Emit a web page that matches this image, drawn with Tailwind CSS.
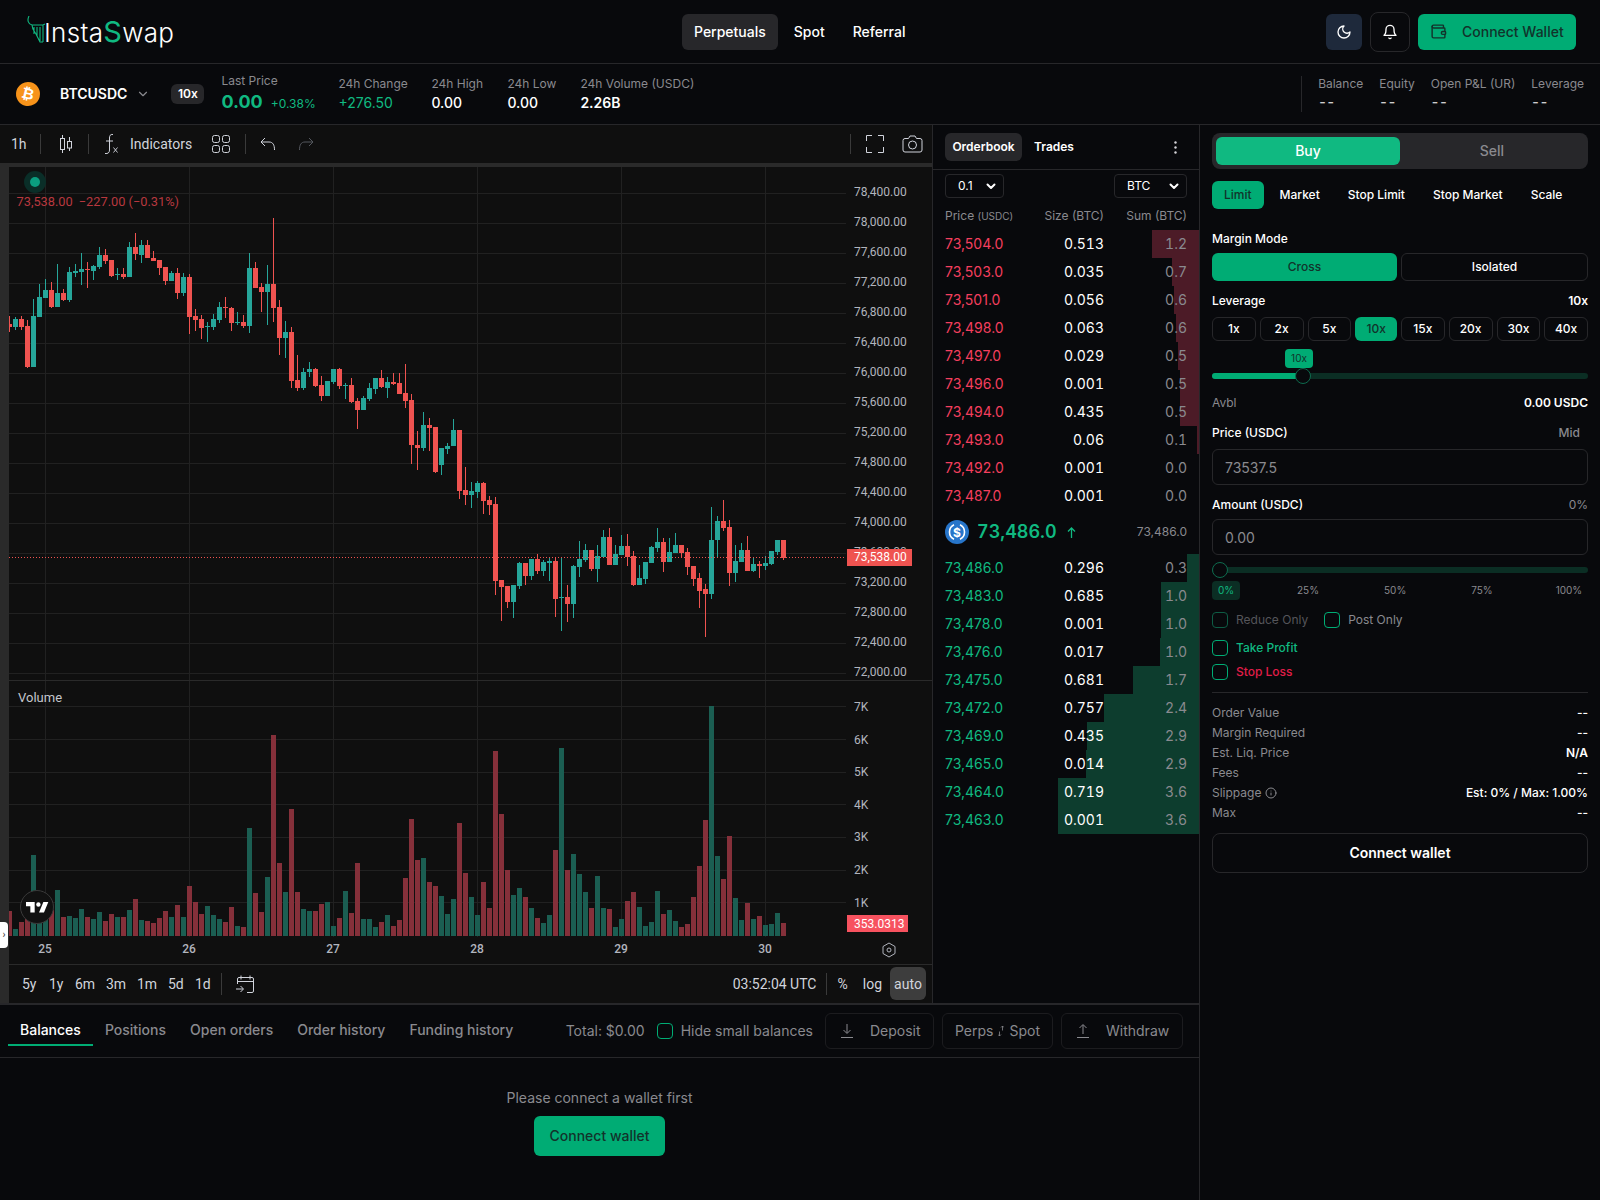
<!DOCTYPE html>
<html lang="en">
<head>
  <meta charset="UTF-8">
  <meta name="viewport" content="width=device-width, initial-scale=1.0" />
  <script src="https://cdn.jsdelivr.net/npm/@tailwindcss/browser@4"></script>
  <title>InstaSwap - BTCUSDC</title>
</head>
<body class="bg-[#08090c] text-white [font-family:Inter,sans-serif]">
<div class="w-[1600px] h-[1200px] overflow-hidden flex flex-col">

  <!-- top nav -->
  <header class="h-[64px] shrink-0 border-b border-[#27272a] relative flex items-center">
    <div class="ml-[27px] flex items-center h-[32px]">
      <svg class="w-[19px] h-[27px] -mt-[4px] shrink-0" viewBox="0 0 19 27" fill="none" stroke="#10b981" stroke-width="1.100">
        <path d="M2 0C0 4 1 8 5 9h11l2-1M5 9c0 4 2 6 4 9l4 8h3M7 11v7M10 11v9M13 11v14M16 9v17"/>
      </svg>
      <span class="-ml-[2px] font-light text-[26px] leading-none tracking-[0.3px]">Insta<span class="text-[#10b981] font-normal text-[29px]">S</span>wap</span>
    </div>
    <nav class="absolute left-[682px] top-[14px] flex gap-1 text-sm font-medium">
      <a class="h-9 px-3 flex items-center rounded-md bg-[#27272a]">Perpetuals</a>
      <a class="h-9 px-3 flex items-center rounded-md">Spot</a>
      <a class="h-9 px-3 flex items-center rounded-md">Referral</a>
    </nav>
    <div class="ml-auto mr-[24px] flex items-center gap-2">
      <button class="w-9 h-9 rounded-md bg-[#1e293b] flex items-center justify-center">
        <svg class="w-4 h-4" viewBox="0 0 24 24" fill="none" stroke="white" stroke-width="2" stroke-linecap="round" stroke-linejoin="round"><path d="M12 3a6 6 0 0 0 9 9 9 9 0 1 1-9-9Z"/></svg>
      </button>
      <button class="w-10 h-10 rounded-lg border border-[#27272a] flex items-center justify-center">
        <svg class="w-4 h-4" viewBox="0 0 24 24" fill="none" stroke="white" stroke-width="2" stroke-linecap="round" stroke-linejoin="round"><path d="M6 8a6 6 0 0 1 12 0c0 7 3 9 3 9H3s3-2 3-9"/><path d="M10.3 21a1.94 1.94 0 0 0 3.4 0"/></svg>
      </button>
      <button class="w-[158px] h-9 rounded-md bg-[#00ac74] flex items-center pl-[12px] text-sm font-medium text-[#12332b]">
        <svg class="w-[17px] h-[17px]" viewBox="0 0 24 24" fill="none" stroke="#12332b" stroke-width="2" stroke-linecap="round" stroke-linejoin="round"><path d="M19 7V4a1 1 0 0 0-1-1H5a2 2 0 0 0 0 4h15a1 1 0 0 1 1 1v4h-3a2 2 0 0 0 0 4h3a1 1 0 0 0 1-1v-2a1 1 0 0 0-1-1"/><path d="M3 5v14a2 2 0 0 0 2 2h15a1 1 0 0 0 1-1v-4"/></svg>
        <span class="ml-[15px]">Connect Wallet</span>
      </button>
    </div>
  </header>

  <!-- market bar -->
  <div class="h-[61px] shrink-0 border-b border-[#27272a] flex items-center">
    <div class="ml-4 w-6 h-6 rounded-full bg-[#f7931a] flex items-center justify-center text-[15px] font-bold text-white [font-family:'DejaVu_Sans',sans-serif] rotate-[14deg]">₿</div>
    <span class="ml-[20px] text-sm font-semibold">BTCUSDC</span>
    <svg class="ml-[9px] w-[14px] h-[14px]" viewBox="0 0 24 24" fill="none" stroke="#8a8a8f" stroke-width="2" stroke-linecap="round" stroke-linejoin="round"><path d="m6 9 6 6 6-6"/></svg>
    <span class="ml-[21px] w-[33px] h-5 rounded-md bg-[#27272a] flex items-center justify-center text-xs font-semibold">10x</span>
    <div class="ml-[17px] w-[117px]">
      <div class="text-xs text-[#8a8a8f] leading-4">Last Price</div>
      <div class="flex items-baseline gap-2 -mt-[1px] leading-6">
        <span class="text-lg font-bold text-[#10b981]">0.00</span>
        <span class="text-xs text-[#10b981]">+0.38%</span>
      </div>
    </div>
    <div class="w-[93px]">
      <div class="text-xs text-[#8a8a8f] leading-4">24h Change</div>
      <div class="text-sm text-[#10b981] leading-5 mt-[1px]">+276.50</div>
    </div>
    <div class="w-[76px]">
      <div class="text-xs text-[#8a8a8f] leading-4">24h High</div>
      <div class="text-sm font-medium leading-5 mt-[1px]">0.00</div>
    </div>
    <div class="w-[73px]">
      <div class="text-xs text-[#8a8a8f] leading-4">24h Low</div>
      <div class="text-sm font-medium leading-5 mt-[1px]">0.00</div>
    </div>
    <div>
      <div class="text-xs text-[#8a8a8f] leading-4">24h Volume (USDC)</div>
      <div class="text-sm font-semibold leading-5 mt-[1px]">2.26B</div>
    </div>
    <div class="ml-auto h-9 border-l border-[#27272a] pl-[16px] pr-4 flex gap-4 text-xs text-[#8a8a8f]">
      <div><div class="leading-4">Balance</div><div class="text-sm font-medium text-white/80 leading-5 tracking-[2px] pl-[1px]">--</div></div>
      <div><div class="leading-4">Equity</div><div class="text-sm font-medium text-white/80 leading-5 tracking-[2px] pl-[1px]">--</div></div>
      <div><div class="leading-4">Open P&amp;L (UR)</div><div class="text-sm font-medium text-white/80 leading-5 tracking-[2px] pl-[1px]">--</div></div>
      <div><div class="leading-4">Leverage</div><div class="text-sm font-medium text-white/80 leading-5 tracking-[2px] pl-[1px]">--</div></div>
    </div>
  </div>

  <div class="flex-1 flex min-h-0">
    <!-- left side -->
    <div class="w-[1200px] border-r border-[#27272a] flex flex-col">
      <div class="h-[878px] flex">

        <!-- chart -->
        <section class="w-[932px] relative flex flex-col bg-[#0f0f0f] [font-family:Roboto,sans-serif] text-[#d1d4dc]">
          <div class="h-[38px] shrink-0 flex items-center text-sm">
            <span class="ml-[11px] w-[15px]">1h</span>
            <i class="ml-[14px] w-px h-5 bg-[#3a3a3a]"></i>
            <svg class="ml-[17px] w-[16px] h-[20px]" viewBox="0 0 16 20" fill="none" stroke="#d1d4dc"><path d="M4.5 1v3M4.5 16v3M11.5 3v4M11.5 14v3"/><rect x="2.5" y="4.5" width="4" height="11"/><rect x="9.5" y="7.5" width="4" height="6.5"/></svg>
            <i class="ml-[14px] w-px h-5 bg-[#3a3a3a]"></i>
            <svg class="ml-[14px] w-[16px] h-[22px]" viewBox="0 0 16 22" fill="none" stroke="#d1d4dc"><path d="M10 1.5C7 1 6.5 3 6.5 5v12c0 2.5-1.5 4-4.5 3.5M3 8h7"/><path d="M10.5 14.5l4 5M14.5 14.5l-4 5" stroke-width=".9"/></svg>
            <span class="ml-[11px] w-[62px]">Indicators</span>
            <svg class="ml-[20px] w-[18px] h-[18px]" viewBox="0 0 18 18" fill="none" stroke="#d1d4dc"><rect x=".5" y=".5" width="7" height="7" rx="2"/><rect x="10.5" y=".5" width="7" height="7" rx="2"/><rect x=".5" y="10.5" width="7" height="7" rx="2"/><rect x="10.5" y="10.5" width="7" height="7" rx="2"/></svg>
            <i class="ml-[15px] w-px h-5 bg-[#3a3a3a]"></i>
            <svg class="ml-[14px] w-[16px] h-[14px]" viewBox="0 0 16 14" fill="none" stroke="#d1d4dc"><path d="M5 1L1 5l4 4M1 5h8c4 0 5.500 3 5.500 8"/></svg>
            <svg class="ml-[22px] w-[16px] h-[14px]" viewBox="0 0 16 14" fill="none" stroke="#55585f"><path d="M11 1l4 4-4 4M15 5H7c-4 0-5.500 3-5.500 8"/></svg>
            <i class="ml-auto w-px h-5 bg-[#3a3a3a]"></i>
            <svg class="ml-[15px] w-[18px] h-[18px]" viewBox="0 0 18 18" fill="none" stroke="#d1d4dc"><path d="M.5 6V.5H6M12 .5h5.500V6M17.500 12v5.500H12M6 17.500H.5V12"/></svg>
            <svg class="ml-[18px] mr-[9px] w-[21px] h-[18px]" viewBox="0 0 21 18" fill="none" stroke="#d1d4dc"><path d="M1 5.500A2 2 0 0 1 3 3.500h3.500L8 1h5l1.500 2.500H18a2 2 0 0 1 2 2V15a2 2 0 0 1-2 2H3a2 2 0 0 1-2-2z"/><circle cx="10.500" cy="10" r="4"/></svg>
          </div>
          <div class="h-1 shrink-0 bg-[#2a2a2a]"></div>
          <div class="flex-1 flex min-h-0">
            <div class="w-[9px] shrink-0 bg-[#2a2a2a]"></div>
            <div class="flex-1 flex flex-col min-w-0">
              <svg id="chart" class="block" width="923" height="797" viewBox="9 167 923 797" shape-rendering="crispEdges">
                <g id="grid"></g>
                <g id="bars"></g>
                <line x1="9" x2="846" y1="557.500" y2="557.500" stroke="#ef5350" stroke-dasharray="1 2"></line>
                <rect x="9" y="680" width="923" height="1" fill="#2a2a2a"></rect>
                <g fill="#b2b5be" font-size="12" shape-rendering="auto">
                  <text x="854" y="196">78,400.00</text>
                  <text x="854" y="226">78,000.00</text>
                  <text x="854" y="256">77,600.00</text>
                  <text x="854" y="286">77,200.00</text>
                  <text x="854" y="316">76,800.00</text>
                  <text x="854" y="346">76,400.00</text>
                  <text x="854" y="376">76,000.00</text>
                  <text x="854" y="406">75,600.00</text>
                  <text x="854" y="436">75,200.00</text>
                  <text x="854" y="466">74,800.00</text>
                  <text x="854" y="496">74,400.00</text>
                  <text x="854" y="526">74,000.00</text>
                  <text x="854" y="556">73,600.00</text>
                  <text x="854" y="586">73,200.00</text>
                  <text x="854" y="616">72,800.00</text>
                  <text x="854" y="646">72,400.00</text>
                  <text x="854" y="676">72,000.00</text>
                  <text x="854" y="711">7K</text>
                  <text x="854" y="744">6K</text>
                  <text x="854" y="776">5K</text>
                  <text x="854" y="809">4K</text>
                  <text x="854" y="841">3K</text>
                  <text x="854" y="874">2K</text>
                  <text x="854" y="907">1K</text>
                  <text x="45" y="953" text-anchor="middle" font-weight="500">25</text>
                  <text x="189" y="953" text-anchor="middle" font-weight="500">26</text>
                  <text x="333" y="953" text-anchor="middle" font-weight="500">27</text>
                  <text x="477" y="953" text-anchor="middle" font-weight="500">28</text>
                  <text x="621" y="953" text-anchor="middle" font-weight="500">29</text>
                  <text x="765" y="953" text-anchor="middle" font-weight="500">30</text>
                  <text x="16.500" y="206" fill="#b8383f" font-size="12.800">73,538.00<tspan dx="6">−227.00 (−0.31%)</tspan></text>
                  <text x="18" y="702" fill="#c4c6cc" font-size="13">Volume</text>
                </g>
                <rect x="847" y="549" width="65" height="17" rx="1" fill="#ef5350"></rect>
                <text x="854" y="561" fill="#fff" font-size="12" shape-rendering="auto">73,538.00</text>
                <rect x="847" y="915" width="61" height="17" rx="1" fill="#f7525f"></rect>
                <text x="854" y="928" fill="#fff" font-size="12" shape-rendering="auto">353.0313</text>
                <g shape-rendering="auto">
                  <circle cx="35" cy="182" r="11" fill="#0a2e28"></circle>
                  <circle cx="35" cy="182" r="5" fill="#0b9e80"></circle>
                  <circle cx="37" cy="907" r="16.500" fill="#111" stroke="#3a3a3a"></circle>
                  <g transform="translate(26 902) scale(.62)" fill="#fff"><path d="M14 17H7V7H0V0h14v17zM29 17h-8L28 0h8l-7 17z"></path><circle cx="20" cy="4" r="3.500"></circle></g>
                  <path d="M889 943l6 3.500v7l-6 3.500-6-3.500v-7z" fill="none" stroke="#b2b5be"></path>
                  <circle cx="889" cy="950" r="2" fill="none" stroke="#b2b5be"></circle>
                </g>
                <rect x="9" y="964" width="923" height="1" fill="#2a2a2a"></rect>
              </svg>
              <div class="h-[39px] shrink-0 flex items-center text-sm border-t border-[#2a2a2a]">
                <span class="ml-[13px] w-[27px]">5y</span>
                <span class="w-[26px]">1y</span>
                <span class="w-[31px]">6m</span>
                <span class="w-[31px]">3m</span>
                <span class="w-[31px]">1m</span>
                <span class="w-[27px]">5d</span>
                <span class="w-[26px]">1d</span>
                <i class="w-px h-[22px] bg-[#3a3a3a]"></i>
                <svg class="ml-[14px] w-[19px] h-[18px]" viewBox="0 0 19 18" fill="none" stroke="#d1d4dc"><path d="M1.500 9V4a1.500 1.500 0 0 1 1.500-1.500h13A1.500 1.500 0 0 1 17.500 4v12a1.500 1.500 0 0 1-1.500 1.500h-5M1.500 6.500h16M5 .5v4M14 .5v4M0 14h7M4.500 11l3 3-3 3"/></svg>
                <span class="ml-auto">03:52:04 UTC</span>
                <i class="ml-[10px] w-px h-[22px] bg-[#3a3a3a]"></i>
                <span class="ml-[10px]">%</span>
                <span class="ml-[15px]">log</span>
                <span class="ml-[8px] mr-[6px] w-[36px] h-[33px] -mt-[1px] rounded-md bg-[#3d3d3d] flex items-center justify-center">auto</span>
              </div>
            </div>
          </div>
          <div class="absolute left-0 top-[797px] w-[8px] h-[26px] rounded-r-[4px] bg-white flex items-center justify-center text-[10px] leading-none text-[#333]">›</div>
        </section>

        <!-- orderbook -->
        <section class="w-[267px] border-l border-[#27272a] flex flex-col">
          <div class="h-[45px] shrink-0 border-b border-[#27272a] flex items-center pl-3 pr-[22px] text-xs font-semibold">
            <span class="w-[77px] h-7 rounded-md bg-[#27272a] flex items-center justify-center">Orderbook</span>
            <span class="ml-[12px]">Trades</span>
            <svg class="ml-auto w-[3px] h-[13px]" viewBox="0 0 3 13" fill="#d4d4d8"><circle cx="1.500" cy="1.500" r="1.200"></circle><circle cx="1.500" cy="6.500" r="1.200"></circle><circle cx="1.500" cy="11.500" r="1.200"></circle></svg>
          </div>
          <div class="flex justify-between px-3 mt-[4px] text-xs">
            <div class="w-[59px] h-6 border border-[#27272a] rounded flex items-center pl-3">0.1
              <svg class="ml-auto mr-[6px] w-[12px] h-[12px]" viewBox="0 0 24 24" fill="none" stroke="white" stroke-width="4" stroke-linecap="round" stroke-linejoin="round"><path d="m5 9 7 7 7-7"/></svg>
            </div>
            <div class="w-[73px] h-6 border border-[#27272a] rounded flex items-center pl-3">BTC
              <svg class="ml-auto mr-[6px] w-[12px] h-[12px]" viewBox="0 0 24 24" fill="none" stroke="white" stroke-width="4" stroke-linecap="round" stroke-linejoin="round"><path d="m5 9 7 7 7-7"/></svg>
            </div>
          </div>
          <div class="flex items-center h-4 mt-[10px] px-3 text-xs text-[#8a8a8f]">
            <span class="flex-1">Price <span class="text-[10px]">(USDC)</span></span>
            <span class="text-right">Size (BTC)</span>
            <span class="w-[83px] text-right">Sum (BTC)</span>
          </div>
          <div id="asks" class="mt-[6px]"></div>
          <div class="h-[44px] flex items-center px-3">
            <svg class="w-6 h-6 shrink-0" viewBox="0 0 24 24"><circle cx="12" cy="12" r="12" fill="#2775ca"></circle><path d="M9 4.800a8 8 0 0 0 0 14.400M15 4.800a8 8 0 0 1 0 14.400" fill="none" stroke="#fff" stroke-width="1.600"></path><text x="12" y="16.500" fill="#fff" font-size="12" font-weight="700" text-anchor="middle">$</text></svg>
            <span class="ml-2 text-lg font-semibold text-[#10b981] tabular-nums">73,486.0</span>
            <svg class="ml-[10px] w-[9px] h-[11px]" viewBox="0 0 9 11" fill="none" stroke="#10b981" stroke-width="1.300"><path d="M4.500 11V1M1 4.500 4.500 1 8 4.500"/></svg>
            <span class="ml-auto text-xs text-[#8a8a8f]">73,486.0</span>
          </div>
          <div id="bids"></div>
        </section>
      </div>

      <!-- positions -->
      <div class="h-[2px] shrink-0 bg-[#27272a]"></div>
      <div class="h-[53px] shrink-0 border-b border-[#27272a] flex items-start pl-2 pr-[16px] text-sm text-[#8a8a8f]">
        <div class="flex pt-[9px] font-medium">
          <span class="h-8 px-3 pt-[2px] flex items-center text-white border-b-2 border-[#00ac74]">Balances</span>
          <span class="h-8 px-3 flex items-center">Positions</span>
          <span class="h-8 px-3 flex items-center">Open orders</span>
          <span class="h-8 px-3 flex items-center">Order history</span>
          <span class="h-8 px-3 flex items-center">Funding history</span>
        </div>
        <div class="ml-auto flex items-center gap-3 pt-[8px]">
          <span class="-ml-[1px]">Total: $0.00</span>
          <label class="flex items-center gap-2"><i class="w-4 h-4 rounded-[4px] border border-[#00ac74]"></i>Hide small balances</label>
          <div class="flex gap-2">
            <button class="w-[109px] h-9 rounded-md border border-[#1c1c1f] flex items-center pl-[15px]">
              <svg class="w-[12px] h-[14px]" viewBox="0 0 12 14" fill="none" stroke="#8a8a8f"><path d="M6 0v9M2.500 6 6 9.500 9.500 6M0 13.500h12"/></svg>
              <span class="ml-[17px]">Deposit</span>
            </button>
            <button class="w-[111px] h-9 rounded-md border border-[#1c1c1f] flex items-center justify-center gap-[5px]">Perps
              <svg class="w-[6px] h-[10px]" viewBox="0 0 6 10" fill="none" stroke="#8a8a8f" stroke-width=".8"><path d="M4.500 0v4.500M3 1.500 4.500 0 6 1.500M1.500 10V5.500M0 8.500 1.500 10 3 8.500"/></svg>
              Spot</button>
            <button class="w-[122px] h-9 rounded-md border border-[#1c1c1f] flex items-center pl-[15px]">
              <svg class="w-[12px] h-[14px]" viewBox="0 0 12 14" fill="none" stroke="#8a8a8f"><path d="M6 10V1M2.500 4 6 .5 9.500 4M0 13.500h12"/></svg>
              <span class="ml-[17px]">Withdraw</span>
            </button>
          </div>
        </div>
      </div>
      <div class="flex-1 flex flex-col items-center pt-[30px]">
        <p class="text-sm text-[#8a8a8f] leading-5">Please connect a wallet first</p>
        <button class="mt-[8px] w-[131px] h-10 rounded-md bg-[#00ac74] text-sm font-medium text-[#12332b]">Connect wallet</button>
      </div>
    </div>

    <!-- order form -->
    <aside class="w-[400px] px-3 flex flex-col text-xs">
      <div class="mt-2 h-9 rounded-lg bg-[#27272a] p-1 flex text-sm font-medium">
        <span class="w-[184px] rounded-md bg-[#10b981] flex items-center justify-center">Buy</span>
        <span class="flex-1 flex items-center justify-center text-[#8a8a8f]">Sell</span>
      </div>
      <div class="mt-3 flex gap-1 font-medium">
        <span class="h-7 px-3 rounded-md bg-[#00ac74] text-[#12332b] flex items-center">Limit</span>
        <span class="h-7 px-3 flex items-center">Market</span>
        <span class="h-7 px-3 flex items-center">Stop Limit</span>
        <span class="h-7 px-3 flex items-center">Stop Market</span>
        <span class="h-7 px-3 flex items-center">Scale</span>
      </div>
      <div class="mt-[22px] h-4 font-medium leading-4">Margin Mode</div>
      <div class="mt-[6px] flex gap-1 font-medium">
        <span class="flex-1 h-7 rounded-md bg-[#00ac74] text-[#12332b] flex items-center justify-center">Cross</span>
        <span class="flex-1 h-7 rounded-md border border-[#27272a] flex items-center justify-center">Isolated</span>
      </div>
      <div class="mt-3 h-4 flex justify-between font-medium leading-4"><span>Leverage</span><span class="font-semibold">10x</span></div>
      <div class="mt-2 flex gap-1 font-medium">
        <span class="flex-1 h-6 rounded-md border border-[#27272a] flex items-center justify-center">1x</span>
        <span class="flex-1 h-6 rounded-md border border-[#27272a] flex items-center justify-center">2x</span>
        <span class="flex-1 h-6 rounded-md border border-[#27272a] flex items-center justify-center">5x</span>
        <span class="flex-1 h-6 rounded-md bg-[#00ac74] text-[#12332b] flex items-center justify-center">10x</span>
        <span class="flex-1 h-6 rounded-md border border-[#27272a] flex items-center justify-center">15x</span>
        <span class="flex-1 h-6 rounded-md border border-[#27272a] flex items-center justify-center">20x</span>
        <span class="flex-1 h-6 rounded-md border border-[#27272a] flex items-center justify-center">30x</span>
        <span class="flex-1 h-6 rounded-md border border-[#27272a] flex items-center justify-center">40x</span>
      </div>
      <div class="mt-8 h-[6px] rounded-full bg-[#0b2e24] relative">
        <div class="absolute left-0 top-0 h-full w-[91px] rounded-full bg-[#00ac74]"></div>
        <div class="absolute left-[73px] -top-[24px] w-[28px] h-[19px] rounded bg-[#00ac74] text-[10px] text-[#12332b] flex items-center justify-center">10x</div>
        <div class="absolute left-[83px] -top-[5px] w-4 h-4 rounded-full bg-[#08090c] border border-[#0e6b4e]"></div>
      </div>
      <div class="mt-4 h-4 flex justify-between leading-4"><span class="text-[#8a8a8f]">Avbl</span><span class="font-semibold">0.00 USDC</span></div>
      <div class="mt-[14px] h-4 flex justify-between font-medium leading-4"><span>Price (USDC)</span><span class="text-[#8a8a8f] pr-2">Mid</span></div>
      <input class="mt-[8px] h-9 shrink-0 rounded-md border border-[#27272a] bg-transparent px-3 text-sm text-[#8a8a8f]" value="73537.5" />
      <div class="mt-[12px] h-4 flex justify-between font-medium leading-4"><span>Amount (USDC)</span><span class="text-[#8a8a8f] font-normal">0%</span></div>
      <input class="mt-[6px] h-9 shrink-0 rounded-md border border-[#27272a] bg-transparent px-3 text-sm text-[#8a8a8f]" value="0.00" />
      <div class="mt-3 h-[6px] rounded-full bg-[#0b2e24] relative">
        <div class="absolute left-0 -top-[5px] w-4 h-4 rounded-full bg-[#08090c] border border-[#0e6b4e]"></div>
      </div>
      <div class="mt-2 h-[19px] flex items-center text-[10px] text-[#8a8a8f]">
        <span class="w-[28px] h-full rounded bg-[#0b2e24] text-[#10b981] flex items-center justify-center">0%</span>
        <span class="ml-[57px]">25%</span>
        <span class="ml-[65px]">50%</span>
        <span class="ml-[65px]">75%</span>
        <span class="ml-[63px]">100%</span>
      </div>
      <div class="mt-3 h-4 flex items-center">
        <i class="w-4 h-4 rounded-[4px] border border-[#0e5c45]"></i><span class="ml-2 text-[#55555a]">Reduce Only</span>
        <i class="ml-4 w-4 h-4 rounded-[4px] border border-[#00ac74]"></i><span class="ml-2 text-[#8a8a8f]">Post Only</span>
      </div>
      <div class="mt-3 h-4 flex items-center font-medium text-[#10b981]"><i class="w-4 h-4 rounded-[4px] border border-[#00ac74]"></i><span class="ml-2">Take Profit</span></div>
      <div class="mt-2 h-4 flex items-center font-medium text-[#e11d48]"><i class="w-4 h-4 rounded-[4px] border border-[#00ac74]"></i><span class="ml-2">Stop Loss</span></div>
      <div class="mt-3 h-px bg-[#27272a]"></div>
      <div class="mt-[10px] text-[#8a8a8f]">
        <div class="h-5 flex items-center justify-between"><span>Order Value</span><span class="text-white font-medium">--</span></div>
        <div class="h-5 flex items-center justify-between"><span>Margin Required</span><span class="text-white font-medium">--</span></div>
        <div class="h-5 flex items-center justify-between"><span>Est. Liq. Price</span><span class="text-white font-semibold">N/A</span></div>
        <div class="h-5 flex items-center justify-between"><span>Fees</span><span class="text-white font-medium">--</span></div>
        <div class="h-5 flex items-center justify-between"><span class="flex items-center gap-1">Slippage <svg class="w-3 h-3" viewBox="0 0 24 24" fill="none" stroke="#8a8a8f" stroke-width="2" stroke-linecap="round"><circle cx="12" cy="12" r="10"></circle><path d="M12 16v-4M12 8h.01"/></svg></span><span class="text-white font-medium">Est: 0% / Max: 1.00%</span></div>
        <div class="h-5 flex items-center justify-between"><span>Max</span><span class="text-white font-medium">--</span></div>
      </div>
      <button class="mt-[10px] h-10 rounded-lg border border-[#27272a] text-sm font-semibold">Connect wallet</button>
    </aside>
  </div>
</div>

<script>
  // candle coords are in 3x px measured from y=160: [green?, bodyTop, bodyBottom, wickTop, wickBottom]
  const first = [[0,492,500,468,515],[1,477,500,472,510],[0,477,500,468,510],[0,498,622,480,624],[1,468,621,418,621],[1,411,471,373,471],[1,390,414,357,414],[0,390,441,366,444],[1,399,441,312,441],[0,399,420,387,423],[1,336,420,321,426],[1,333,339,312,351],[1,327,336,279,375],[0,327,330,306,384],[1,318,333,315,360],[1,285,321,261,327],[0,285,303,267,312],[0,300,348,300,351],[1,342,345,324,360],[0,342,351,324,357],[1,261,351,246,351],[0,261,282,219,300],[1,255,285,240,309],[0,255,294,240,294],[0,294,303,273,303],[0,300,324,300,345],[0,321,363,321,375],[1,339,363,333,363],[0,339,399,324,417],[1,351,399,339,408],[0,351,471,342,522],[0,468,480,447,513],[0,477,504,465,537],[1,498,501,486,546],[1,477,501,462,510],[1,441,480,426,489],[0,441,444,411,474],[0,444,489,441,513],[1,486,490,456,495],[0,486,498,465,504],[1,324,498,279,519],[0,324,384,306,384],[0,381,396,369,456],[1,372,396,315,495],[0,372,444,174,486],[0,441,534,420,585],[1,516,534,483,594],[0,516,663,501,684],[0,660,684,585,693],[1,636,684,624,690],[1,627,636,606,651],[0,627,678,624,681],[0,675,708,648,723],[1,663,708,663,708],[1,627,666,627,672],[0,627,678,624,687],[1,675,678,669,717],[0,675,726,654,729],[0,723,750,714,807],[1,714,750,708,750],[1,684,717,669,723],[1,654,687,654,702],[0,654,681,630,684],[1,666,684,651,714],[0,666,672,639,675],[0,669,702,639,702],[0,699,723,612,744],[0,720,855,702,912],[0,855,864,813,930],[1,795,864,756,873],[0,795,804,774,873],[0,801,936,801,940],[1,864,915,864,945],[1,858,867,849,882]];
  // same thing, measured from y=380 (the +660 below puts them on the first scale)
  const second = [[1,150,198,117,198],[0,150,333,150,357],[0,330,345,261,375],[1,333,345,306,384],[1,309,336,303,354],[0,309,363,306,402],[0,360,375,348,405],[0,372,603,351,645],[0,600,621,600,723],[0,618,666,618,684],[1,615,666,615,714],[1,549,618,546,627],[0,549,588,549,615],[1,537,588,537,600],[0,537,573,522,582],[1,546,573,540,588],[1,543,549,531,603],[0,543,657,531,711],[1,651,654,531,753],[0,651,672,615,726],[1,558,672,555,714],[1,537,561,483,591],[1,510,540,492,546],[0,510,567,510,573],[1,528,567,495,606],[1,471,531,450,531],[0,471,555,444,555],[1,522,555,495,555],[1,498,525,465,525],[0,498,531,462,558],[0,528,615,513,618],[1,594,615,555,615],[1,546,597,546,612],[1,501,549,498,549],[1,486,504,444,516],[0,486,546,474,576],[1,516,546,474,546],[1,495,519,459,519],[0,495,519,495,534],[0,516,561,504,585],[0,558,597,558,618],[0,594,633,579,684],[0,627,642,612,771],[1,480,642,381,657],[1,423,480,408,534],[0,423,444,360,453],[0,441,579,420,618],[1,543,579,495,606],[1,510,546,489,546],[0,510,573,468,573],[1,552,573,531,576],[0,552,558,543,594],[1,549,558,528,570],[1,513,552,513,555],[1,480,516,480,525],[0,480,534,480,540]];
  const candles = first.concat(second.map(c => [c[0], c[1] + 660, c[2] + 660, c[3] + 660, c[4] + 660]));

  // tops of the volume bars, 3x px from y=680, baseline is 768
  const volumes = [693,747,726,714,525,730,720,690,630,711,708,714,687,711,717,696,723,702,711,711,690,657,720,723,729,714,693,711,675,711,618,666,702,678,705,717,726,681,738,741,444,639,696,591,165,549,636,387,636,687,693,693,672,666,738,714,633,699,549,717,717,741,726,705,738,720,594,417,540,534,606,618,648,702,657,429,579,651,705,606,684,213,402,570,645,624,651,684,714,729,705,510,204,570,522,582,636,684,588,684,687,741,717,663,636,681,738,726,633,702,690,723,741,732,651,558,420,78,528,597,468,654,720,669,717,708,735,732,699,729];

  let gridSvg = '';
  for (let y = 193; y <= 673; y += 30) gridSvg += `<rect x="9" y="${y}" width="837" height="1" fill="#212121"></rect>`;
  for (const y of [706, 739, 772, 804, 837, 870, 902]) gridSvg += `<rect x="9" y="${y}" width="837" height="1" fill="#212121"></rect>`;
  for (let x = 45; x <= 765; x += 144) gridSvg += `<rect x="${x}" y="167" width="1" height="770" fill="#212121"></rect>`;
  document.getElementById('grid').innerHTML = gridSvg;

  let barsSvg = '';
  candles.forEach((c, i) => {
    const top = 680 + volumes[i] / 3;
    barsSvg += `<rect x="${7 + 6 * i}" y="${top}" width="5" height="${936 - top}" fill="${c[0] ? '#1b5e52' : '#85303a'}"></rect>`;
  });
  candles.forEach((c, i) => {
    const color = c[0] ? '#26a69a' : '#ef5350';
    barsSvg += `<rect x="${9 + 6 * i}" y="${160 + c[3] / 3}" width="1" height="${(c[4] - c[3]) / 3}" fill="${color}"></rect>`;
    barsSvg += `<rect x="${7 + 6 * i}" y="${160 + c[1] / 3}" width="5" height="${(c[2] - c[1]) / 3}" fill="${color}"></rect>`;
  });
  document.getElementById('bars').innerHTML = barsSvg;

  // orderbook rows: price, size, sum, depth bar width
  const asks = [['73,504.0','0.513','1.2',47],['73,503.0','0.035','0.7',27],['73,501.0','0.056','0.6',25],['73,498.0','0.063','0.6',23],['73,497.0','0.029','0.5',21],['73,496.0','0.001','0.5',19],['73,494.0','0.435','0.5',19],['73,493.0','0.06','0.1',2],['73,492.0','0.001','0.0',0],['73,487.0','0.001','0.0',0]];
  const bids = [['73,486.0','0.296','0.3',12],['73,483.0','0.685','1.0',38],['73,478.0','0.001','1.0',38],['73,476.0','0.017','1.0',39],['73,475.0','0.681','1.7',66],['73,472.0','0.757','2.4',95],['73,469.0','0.435','2.9',112],['73,465.0','0.014','2.9',113],['73,464.0','0.719','3.6',141],['73,463.0','0.001','3.6',141]];

  function bookRows(rows, priceClass, barClass) {
    return rows.map(r => `
      <div class="relative h-7 flex items-center px-3 text-sm">
        <div class="absolute right-0 top-0 h-full ${barClass}" style="width:${r[3]}px"></div>
        <span class="relative flex-1 ${priceClass}">${r[0]}</span>
        <span class="relative text-right tabular-nums">${r[1]}</span>
        <span class="relative w-[83px] text-right text-[#8a8a8f] tabular-nums">${r[2]}</span>
      </div>`).join('');
  }
  document.getElementById('asks').innerHTML = bookRows(asks, 'text-[#f43f5e]', 'bg-[#4c1b27]');
  document.getElementById('bids').innerHTML = bookRows(bids, 'text-[#10b981]', 'bg-[#0d3d2e]');
</script>
</body>
</html>
